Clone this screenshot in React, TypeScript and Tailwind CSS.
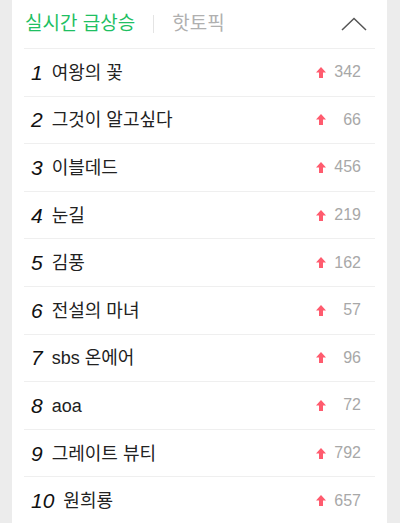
const ITEMS: { rank: number; title: string; count: number }[] = [
  { rank: 1, title: "여왕의 꽃", count: 342 },
  { rank: 2, title: "그것이 알고싶다", count: 66 },
  { rank: 3, title: "이블데드", count: 456 },
  { rank: 4, title: "눈길", count: 219 },
  { rank: 5, title: "김풍", count: 162 },
  { rank: 6, title: "전설의 마녀", count: 57 },
  { rank: 7, title: "sbs 온에어", count: 96 },
  { rank: 8, title: "aoa", count: 72 },
  { rank: 9, title: "그레이트 뷰티", count: 792 },
  { rank: 10, title: "원희룡", count: 657 },
];

function UpArrow() {
  return (
    <svg width="10" height="11" viewBox="0 0 10 11" aria-hidden>
      <path d="M5 0 L10 5.5 L7 5.5 L7 11 L3 11 L3 5.5 L0 5.5 Z" fill="#ff5b6e" />
    </svg>
  );
}

function Row({ rank, title, count }: { rank: number; title: string; count: number }) {
  return (
    <li className="flex items-center h-[47.6px] border-t border-[#efefef] pl-[7px] pr-[14px]">
      <span className="italic text-[21px] text-[#111] leading-none">{rank}</span>
      <span className="ml-[9px] text-[18px] text-[#222] leading-none flex-1 truncate pt-[1px]">
        {title}
      </span>
      <UpArrow />
      <span className="w-[35px] text-right text-[16px] text-[#a8a8a8] leading-none">{count}</span>
    </li>
  );
}

export default function App() {
  return (
    <div
      className="w-[400px] h-[523px] overflow-hidden bg-[#ececec] pl-[12px] pr-[13px]"
      style={{ fontFamily: '"Liberation Sans", "Noto Sans CJK KR", sans-serif' }}
    >
      <div className="bg-white h-full px-[12px]">
        <div className="flex items-center h-[48px]">
          <span className="text-[19px] text-[#1fbf63] pl-[1px]">실시간 급상승</span>
          <span className="ml-[18px] w-px h-[18px] bg-[#e4e4e4]" />
          <span className="ml-[18px] text-[19px] text-[#b0b0b0]">핫토픽</span>
          <svg className="ml-auto mr-[8px]" width="26" height="14" viewBox="0 0 26 14" aria-hidden>
            <path d="M1 13 L13 1.5 L25 13" fill="none" stroke="#555" strokeWidth="1.5" />
          </svg>
        </div>
        <ul>
          {ITEMS.map((it) => (
            <Row key={it.rank} {...it} />
          ))}
        </ul>
      </div>
    </div>
  );
}
